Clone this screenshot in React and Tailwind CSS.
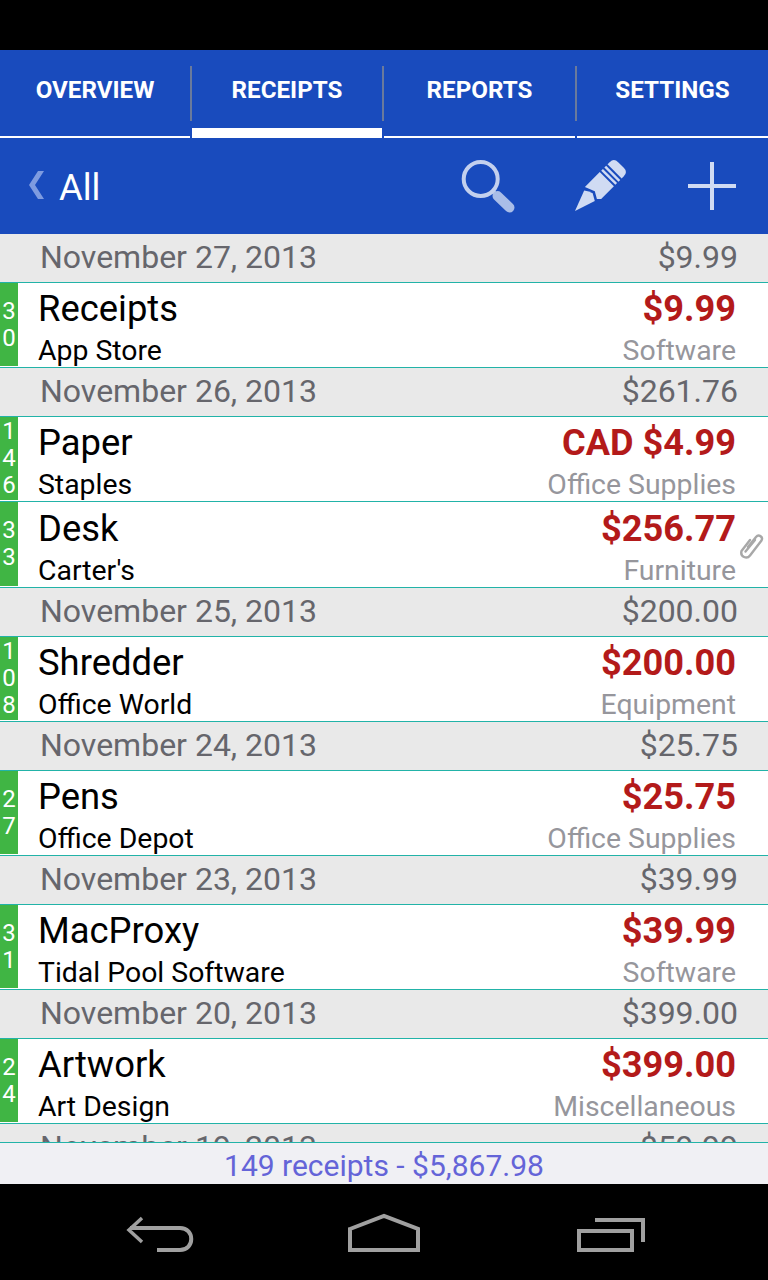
const FONT = { fontFamily: 'Roboto, sans-serif' }

const days = [
  { date: 'November 27, 2013', total: '$9.99', rows: [{ id: '30', title: 'Receipts', sub: 'App Store', amount: '$9.99', cat: 'Software' }] },
  { date: 'November 26, 2013', total: '$261.76', rows: [
    { id: '146', title: 'Paper', sub: 'Staples', amount: 'CAD $4.99', cat: 'Office Supplies' },
    { id: '33', title: 'Desk', sub: "Carter's", amount: '$256.77', cat: 'Furniture', clip: true },
  ] },
  { date: 'November 25, 2013', total: '$200.00', rows: [{ id: '108', title: 'Shredder', sub: 'Office World', amount: '$200.00', cat: 'Equipment' }] },
  { date: 'November 24, 2013', total: '$25.75', rows: [{ id: '27', title: 'Pens', sub: 'Office Depot', amount: '$25.75', cat: 'Office Supplies' }] },
  { date: 'November 23, 2013', total: '$39.99', rows: [{ id: '31', title: 'MacProxy', sub: 'Tidal Pool Software', amount: '$39.99', cat: 'Software' }] },
  { date: 'November 20, 2013', total: '$399.00', rows: [{ id: '24', title: 'Artwork', sub: 'Art Design', amount: '$399.00', cat: 'Miscellaneous' }] },
  { date: 'November 19, 2013', total: '$59.99', rows: [] },
]

const Tab = ({ label, active, last, width }) => (
  <div className={`relative h-full flex flex-col ${width}`}>
    <div className="flex-1 flex items-center justify-center pb-[6px] text-[24.2px] font-bold text-white">{label}</div>
    <div className="h-[2px] bg-white" />
    {active && <div className="absolute left-0 right-0 bottom-0 h-[10px] bg-white" />}
    {!last && <div className="absolute right-[-2px] top-[16px] w-[2px] h-[55px] bg-[#6a7a9c]" />}
  </div>
)

const DateHeader = ({ date, total }) => (
  <div className="h-[49px] shrink-0 flex items-center justify-between pb-[2px] pl-[40px] pr-[30px] bg-[#e9e9e9] border-b border-[#22b3a8] text-[32px] text-[#66666c]">
    <span>{date}</span>
    <span>{total}</span>
  </div>
)

const Row = ({ id, title, sub, amount, cat, clip }) => (
  <div className={`relative shrink-0 flex bg-white border-b border-[#22b3a8] ${clip ? 'h-[86px]' : 'h-[85px]'}`}>
    <div className="w-[18px] mb-px bg-[#40b544] flex flex-col justify-center items-center text-[24px] leading-[27px] text-white">
      {id.split('').map((d, i) => <span key={i}>{d}</span>)}
    </div>
    <div className={`flex-1 flex justify-between pl-[20px] pr-[32px] ${clip ? 'pt-[2px]' : 'pt-[1px]'}`}>
      <div className="flex flex-col">
        <span className="text-[36.4px] leading-[50px] text-black">{title}</span>
        <span className="text-[28.4px] leading-[33px] text-black">{sub}</span>
      </div>
      <div className="flex flex-col items-end">
        <span className="text-[36.2px] leading-[50px] font-bold text-[#b31a1a]">{amount}</span>
        <span className="text-[28.4px] leading-[33px] text-[#96969c]">{cat}</span>
      </div>
    </div>
    {clip && (
      <svg className="absolute right-[3px] top-[31px]" width="26" height="28" viewBox="0 0 26 28" fill="none" stroke="#a8a8a8" strokeWidth="2.4" strokeLinecap="round" strokeLinejoin="round">
        <path d="M9 14 L17 4 C19.5 1 24.5 3.5 22.5 7.5 L11 22.5 C8 26.5 1 24 2.5 18 L11 7" />
        <path d="M6.5 18.5 L16 7" />
      </svg>
    )}
  </div>
)

export default function App() {
  return (
    <div className="w-[768px] h-[1280px] flex flex-col bg-black overflow-hidden" style={FONT}>
      <div className="h-[50px] shrink-0" />

      <div className="h-[88px] shrink-0 flex gap-[2px] bg-[#194bbd]">
        <Tab label="OVERVIEW" width="w-[190px]" />
        <Tab label="RECEIPTS" width="w-[190px]" active />
        <Tab label="REPORTS" width="w-[191px]" />
        <Tab label="SETTINGS" width="w-[191px]" last />
      </div>

      <div className="h-[96px] shrink-0 flex items-center pl-[28px] bg-[#194bbd]">
        <svg className="mt-[-2px]" width="16" height="30" viewBox="0 0 16 30" fill="#7e9be0">
          <path d="M10 1 H16 L7 15 L16 29 H10 L1 15 Z" />
        </svg>
        <span className="ml-[15px] pt-[4px] text-[36.4px] text-white">All</span>
        <svg className="ml-auto blur-[0.5px]" width="56" height="56" viewBox="0 0 56 56" fill="none">
          <circle cx="21.7" cy="21" r="17" stroke="#c3d0ee" strokeWidth="4" />
          <path d="M34 33.5 L38 37.5" stroke="#c3d0ee" strokeWidth="4" />
          <path d="M38.5 38 L50.5 49.5" stroke="#a9bde8" strokeWidth="10" strokeLinecap="round" />
        </svg>
        <svg className="ml-[58px]" width="54" height="54" viewBox="0 0 54 54" fill="#d0dbf3">
          <g transform="translate(2 52) rotate(-45)">
            <path d="M0 0 L21 -8 Q24 -4 25 0 L21 7 Z" />
            <path d="M24 -10 H45 V10 H27 L24 7 L28 0 Z" />
            <rect x="47" y="-10" width="2.5" height="20" />
            <rect x="51.5" y="-10" width="2.5" height="20" />
            <path d="M56 -10 H59 Q65 -10 65 -4 V4 Q65 10 59 10 H56 Z" />
          </g>
        </svg>
        <svg className="ml-[60px] mr-[31px]" width="50" height="50" viewBox="0 0 50 50" stroke="#d0dbf3" strokeWidth="4">
          <path d="M25 1 V49 M1 25 H49" />
        </svg>
      </div>

      <div className="flex-1 min-h-0 flex flex-col overflow-hidden bg-white">
        {days.map((d) => (
          <div key={d.date} className="shrink-0 flex flex-col">
            <DateHeader date={d.date} total={d.total} />
            {d.rows.map((r) => <Row key={r.id} {...r} />)}
          </div>
        ))}
      </div>

      <div className="h-[42px] shrink-0 flex items-center justify-center pt-[3px] bg-[#f0f0f4] border-t border-[#22b3a8] text-[30px] text-[#6464d8]">
        149 receipts - $5,867.98
      </div>

      <div className="h-[96px] shrink-0 flex items-start pt-[28px] pl-[125px] bg-black">
        <svg width="70" height="40" viewBox="0 0 70 40" fill="none" stroke="#a0a0a0" strokeWidth="4">
          <path d="M17 6 L4 18 L17 30" strokeWidth="3.5" />
          <path d="M5 16 H55 C70 16 70 38 55 38 H32" />
        </svg>
        <svg className="ml-[151px]" width="76" height="42" viewBox="0 0 76 42" fill="none" stroke="#a0a0a0" strokeWidth="4">
          <path d="M4 17 L38 4 L72 17 V38 H4 Z" />
        </svg>
        <svg className="ml-[155px]" width="70" height="40" viewBox="0 0 70 40" fill="none" stroke="#a0a0a0" strokeWidth="4">
          <path d="M18 8 H66 V30" />
          <rect x="2" y="19" width="53" height="19" />
        </svg>
      </div>
    </div>
  )
}
